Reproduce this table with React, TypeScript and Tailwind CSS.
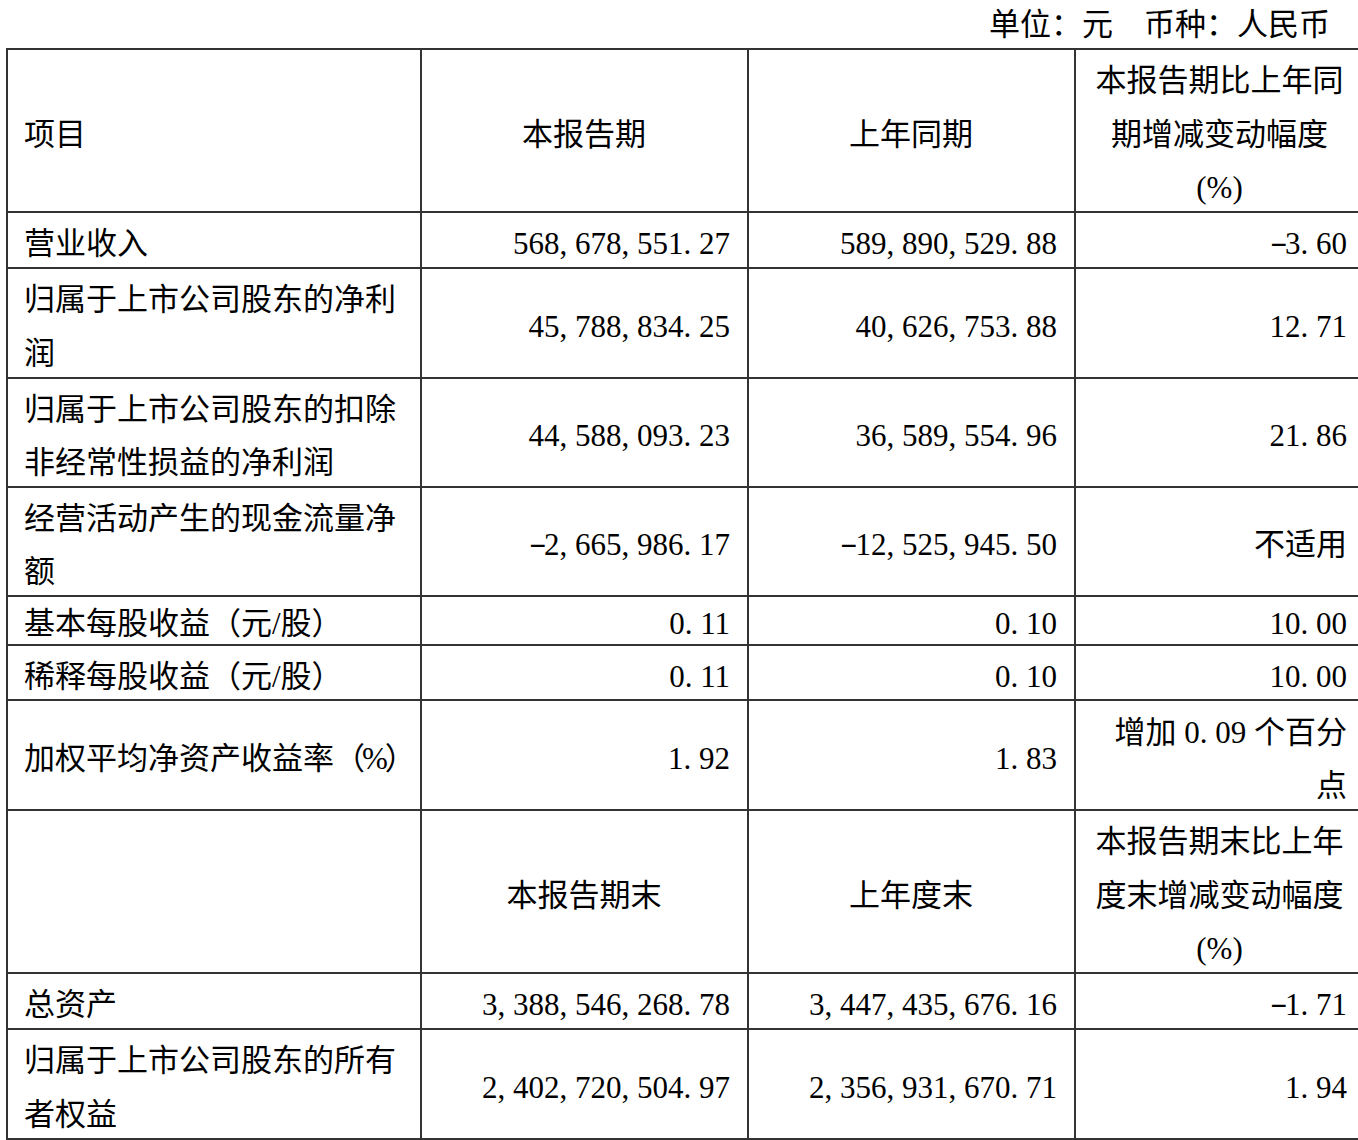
import React from "react";

type Row = {
  label: React.ReactNode;
  a: string;
  b: string;
  c: React.ReactNode;
  h: string;
  lh?: string;
};

// SimSun-style half-width digits: comma, period and minus each take a 0.5em slot
function Num({ value }: { value: string }) {
  return (
    <span className="whitespace-nowrap">
      {value.split("").map((ch, i) => {
        if (ch === "," || ch === ".") {
          return (
            <span key={i} className="inline-block w-[0.5em] text-left">
              {ch}
            </span>
          );
        }
        if (ch === "-") {
          return (
            <span key={i} className="inline-block w-[0.5em] text-left">
              <span className="inline-block origin-left scale-x-[1.7] -translate-y-[2px]">-</span>
            </span>
          );
        }
        return <span key={i}>{ch}</span>;
      })}
    </span>
  );
}

const pct = <span className="tracking-[-3px]">（%）</span>;

const flowRows: Row[] = [
  { label: "营业收入", a: "568,678,551.27", b: "589,890,529.88", c: <Num value="-3.60" />, h: "h-[55px]" },
  {
    label: (
      <>
        归属于上市公司股东的净利
        <br />润
      </>
    ),
    a: "45,788,834.25",
    b: "40,626,753.88",
    c: <Num value="12.71" />,
    h: "h-[110px]",
  },
  {
    label: (
      <>
        归属于上市公司股东的扣除
        <br />
        非经常性损益的净利润
      </>
    ),
    a: "44,588,093.23",
    b: "36,589,554.96",
    c: <Num value="21.86" />,
    h: "h-[109px]",
  },
  {
    label: (
      <>
        经营活动产生的现金流量净
        <br />额
      </>
    ),
    a: "-2,665,986.17",
    b: "-12,525,945.50",
    c: "不适用",
    h: "h-[109px]",
  },
  {
    label: "基本每股收益（元/股）",
    a: "0.11",
    b: "0.10",
    c: <Num value="10.00" />,
    h: "h-[49px]",
    lh: "leading-[44px]",
  },
  { label: "稀释每股收益（元/股）", a: "0.11", b: "0.10", c: <Num value="10.00" />, h: "h-[55px]" },
  {
    label: <span className="whitespace-nowrap">加权平均净资产收益率{pct}</span>,
    a: "1.92",
    b: "1.83",
    c: (
      <>
        增加 <Num value="0.09" /> 个百分
        <br />点
      </>
    ),
    h: "h-[110px]",
  },
];

const stockRows: Row[] = [
  { label: "总资产", a: "3,388,546,268.78", b: "3,447,435,676.16", c: <Num value="-1.71" />, h: "h-[55px]" },
  {
    label: (
      <>
        归属于上市公司股东的所有
        <br />
        者权益
      </>
    ),
    a: "2,402,720,504.97",
    b: "2,356,931,670.71",
    c: <Num value="1.94" />,
    h: "h-[110px]",
  },
];

const cell = "border-2 border-[#333] pl-[16px] pr-[17px] py-0 align-middle";

// small baseline nudge: the print font sits a few px lower than Noto CJK
function T({ children }: { children: React.ReactNode }) {
  return <span className="relative top-[4px]">{children}</span>;
}

function DataRow({ row }: { row: Row }) {
  const lh = row.lh ?? "";
  return (
    <tr className={`${row.h} ${lh}`}>
      <td className={`${cell} text-left`}>
        <T>{row.label}</T>
      </td>
      <td className={`${cell} text-right`}>
        <T>
          <Num value={row.a} />
        </T>
      </td>
      <td className={`${cell} text-right`}>
        <T>
          <Num value={row.b} />
        </T>
      </td>
      <td className={`${cell} text-right`}>
        <T>{row.c}</T>
      </td>
    </tr>
  );
}

function HeadRow({ a, b, c1, c2 }: { a: string; b: string; c1: string; c2: string }) {
  return (
    <tr className="h-[163px]">
      <td className={`${cell} text-left`}>
        <T>{a === "" ? null : "项目"}</T>
      </td>
      <td className={`${cell} text-center`}>
        <T>{a}</T>
      </td>
      <td className={`${cell} text-center`}>
        <T>{b}</T>
      </td>
      <td className={`${cell} text-center`}>
        <T>
          {c1}
          <br />
          {c2}
          <br />
          (%)
        </T>
      </td>
    </tr>
  );
}

export default function App() {
  return (
    <div className="w-[1358px] h-[1140px] overflow-hidden bg-white text-black font-['Liberation_Serif','Noto_Sans_CJK_SC',serif] text-[31px] leading-[53.5px]">
      <div className="h-[48px] flex items-center justify-end pr-[28px] leading-none">
        单位：元　币种：人民币
      </div>
      <table className="ml-[6px] w-[1358px] table-fixed border-collapse">
        <colgroup>
          <col className="w-[414px]" />
          <col className="w-[327px]" />
          <col className="w-[327px]" />
          <col className="w-[290px]" />
        </colgroup>
        <tbody>
          <HeadRow a="本报告期" b="上年同期" c1="本报告期比上年同" c2="期增减变动幅度" />
          {flowRows.map((r, i) => (
            <DataRow key={i} row={r} />
          ))}
          <tr className="h-[163px]">
            <td className={cell}></td>
            <td className={`${cell} text-center`}>
              <T>本报告期末</T>
            </td>
            <td className={`${cell} text-center`}>
              <T>上年度末</T>
            </td>
            <td className={`${cell} text-center`}>
              <T>
                本报告期末比上年
                <br />
                度末增减变动幅度
                <br />
                (%)
              </T>
            </td>
          </tr>
          {stockRows.map((r, i) => (
            <DataRow key={i} row={r} />
          ))}
        </tbody>
      </table>
    </div>
  );
}
